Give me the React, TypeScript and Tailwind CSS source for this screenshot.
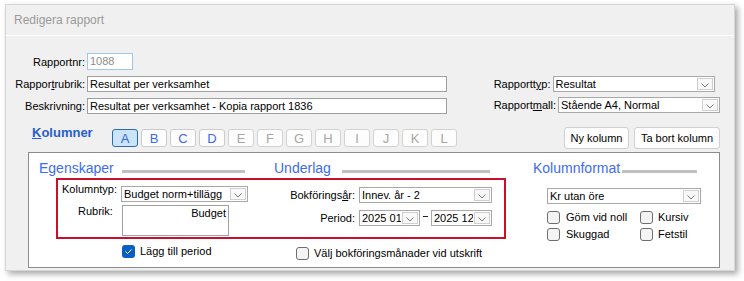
import clsx from 'clsx'

const tabs = ['A', 'B', 'C', 'D', 'E', 'F', 'G', 'H', 'I', 'J', 'K', 'L']

function Chevron() {
  return (
    <svg width="8" height="5" viewBox="0 0 8 5" className="mt-[4px]">
      <path d="M0.5 0.5 L4 4 L7.5 0.5" fill="none" stroke="#7a7a7a" strokeWidth="1" />
    </svg>
  )
}

function Combo({ value, className }: { value: string; className: string }) {
  return (
    <div className={clsx('flex h-[16px] shrink-0 border border-[#a8a8a8] bg-white', className)}>
      <span className="flex-1 overflow-hidden whitespace-nowrap pl-[2px] leading-[14px]">{value}</span>
      <span className="m-[1px] flex w-[16px] justify-center border border-[#cfcfcf] bg-[#f8f8f8]">
        <Chevron />
      </span>
    </div>
  )
}

function Check({ checked }: { checked?: boolean }) {
  if (checked) {
    return (
      <span className="flex h-[13px] w-[13px] shrink-0 items-center justify-center rounded-[3px] bg-[#0b5fc2]">
        <svg width="9" height="7" viewBox="0 0 9 7">
          <path d="M1.5 3.5 L3.5 5.5 L7.5 1.5" fill="none" stroke="white" strokeWidth="1" />
        </svg>
      </span>
    )
  }
  return <span className="h-[13px] w-[13px] shrink-0 rounded-[3px] border border-[#6e6e6e] bg-[#f4f4f4]" />
}

function Label({ children, className }: { children: React.ReactNode; className?: string }) {
  return <span className={clsx('shrink-0 whitespace-nowrap text-right leading-[16px]', className)}>{children}</span>
}

export default function App() {
  return (
    <div className="min-h-[281px] bg-white pl-[5px] pt-[4px] text-[11px] text-black [font-family:'Liberation_Sans',Arial,sans-serif]">
      <div className="flex h-[267px] w-[730px] flex-col border border-[#d6d6d6] bg-[#f0f0f0] shadow-[3px_3px_6px_rgba(0,0,0,0.35)]">
        <div className="h-[31px] shrink-0 border-b border-white pl-[8px] text-[12px] leading-[30px] text-[#9a9a9a]">
          Redigera rapport
        </div>

        {/* report fields */}
        <div className="flex pr-[14px] pt-[17px]">
          <div className="flex flex-col gap-[6px]">
            <div className="flex items-center">
              <Label className="w-[79px]">Rapportnr:</Label>
              <div className="ml-[2px] h-[17px] w-[46px] border border-[#9dc7ef] bg-white pl-[2px] leading-[15px] text-[#8c8c8c]">
                1088
              </div>
            </div>
            <div className="flex items-center">
              <Label className="w-[79px]">
                Rappor<u>t</u>rubrik:
              </Label>
              <div className="ml-[2px] h-[16px] w-[360px] border border-[#a0a0a0] bg-white pl-[2px] leading-[14px]">
                Resultat per verksamhet
              </div>
            </div>
            <div className="flex items-center">
              <Label className="w-[79px]">Beskrivning:</Label>
              <div className="ml-[2px] h-[16px] w-[360px] border border-[#a0a0a0] bg-white pl-[2px] leading-[14px]">
                Resultat per verksamhet - Kopia rapport 1836
              </div>
            </div>
          </div>
          <div className="ml-auto mt-[23px] flex flex-col gap-[5px]">
            <div className="flex items-center">
              <Label>
                Rapportt<u>y</u>p:
              </Label>
              <Combo value="Resultat" className="ml-[2px] w-[162px]" />
            </div>
            <div className="flex items-center">
              <Label>
                Rapport<u>m</u>all:
              </Label>
              <Combo value="Stående A4, Normal" className="ml-[2px] w-[162px]" />
            </div>
          </div>
        </div>

        {/* column tabs */}
        <div className="mt-[13px] flex h-[22px] items-center pr-[14px]">
          <div className="-mt-[2px] ml-[26px] w-[80px] self-start text-[13px] font-bold leading-[15px] text-[#2660cc]">
            <u>K</u>olumner
          </div>
          <div className="flex gap-[3px]">
            {tabs.map((t, i) => (
              <div
                key={t}
                className={clsx(
                  'flex h-[18px] w-[26px] items-center justify-center rounded-[3px] border text-[13px] leading-none',
                  i === 0
                    ? 'border-[#2f6bab] bg-[#cce4f7] text-[#3569e0]'
                    : i < 4
                      ? 'border-[#cbcbcb] bg-[#fdfdfd] text-[#3c68f0]'
                      : 'border-[#d2d2d2] bg-[#fdfdfd] text-[#a6a6a6]',
                )}
              >
                {t}
              </div>
            ))}
          </div>
          <div className="ml-auto flex gap-[5px]">
            <button className="h-[22px] w-[65px] rounded-[3px] border border-[#d0d0d0] bg-[#fdfdfd] text-[11px]">
              Ny kolumn
            </button>
            <button className="h-[22px] w-[86px] rounded-[3px] border border-[#d0d0d0] bg-[#fdfdfd] text-[11px]">
              Ta bort kolumn
            </button>
          </div>
        </div>

        {/* column panel */}
        <div className="ml-[22px] mr-[14px] mt-[3px] h-[116px] border border-[#8c8c8c] bg-white">
          <div className="flex items-start pl-[10px] pt-[7px] text-[14px] leading-[16px] text-[#3b6cf2]">
            <span className="w-[83px]">Egenskaper</span>
            <span className="mt-[10px] h-[3px] w-[123px] bg-[#c0c0c0]" />
            <span className="ml-[29px] w-[68px]">Underlag</span>
            <span className="mt-[10px] h-[3px] w-[148px] bg-[#c0c0c0]" />
            <span className="ml-[43px] w-[89px]">Kolumnformat</span>
            <span className="mt-[10px] h-[3px] w-[75px] bg-[#c0c0c0]" />
          </div>

          <div className="mt-[2px] flex">
            <div className="ml-[27px] flex h-[61px] w-[450px] border-2 border-[#c8102e]">
              <div className="flex flex-col">
                <div className="flex h-[22px] items-start">
                  <span className="w-[63px] pl-[4px] pt-[3px] leading-[13px]">Kolumntyp:</span>
                  <Combo value="Budget norm+tillägg" className="mt-[6px] w-[127px]" />
                </div>
                <div className="mt-[3px] flex items-start">
                  <span className="w-[64px] pl-[20px] leading-[13px]">Rubrik:</span>
                  <div className="h-[31px] w-[107px] border border-[#a0a0a0] bg-white pr-[2px] pt-[1px] text-right leading-[13px]">
                    Budget
                  </div>
                </div>
              </div>
              <div className="ml-auto flex flex-col gap-[7px] pr-[12px] pt-[7px]">
                <div className="flex items-center">
                  <Label className="w-[66px]">
                    Bokförings<u>å</u>r:
                  </Label>
                  <Combo value="Innev. år - 2" className="ml-[4px] w-[133px]" />
                </div>
                <div className="flex items-center">
                  <Label className="w-[66px]">Period:</Label>
                  <Combo value="2025 01" className="ml-[4px] w-[61px]" />
                  <span className="mx-[3px] h-[1px] w-[5px] -translate-y-[2px] bg-[#222]" />
                  <Combo value="2025 12" className="w-[61px]" />
                </div>
              </div>
            </div>

            <div className="ml-[41px] flex flex-col">
              <Combo value="Kr utan öre" className="mt-[10px] w-[154px]" />
              <div className="mt-[7px] flex flex-col gap-[4px] leading-[13px]">
                <div className="flex">
                  <div className="flex w-[93px] items-center gap-[6px]">
                    <Check />
                    <span>Göm vid noll</span>
                  </div>
                  <div className="flex items-center gap-[5px]">
                    <Check />
                    <span>Kursiv</span>
                  </div>
                </div>
                <div className="flex">
                  <div className="flex w-[93px] items-center gap-[6px]">
                    <Check />
                    <span>Skuggad</span>
                  </div>
                  <div className="flex items-center gap-[5px]">
                    <Check />
                    <span>Fetstil</span>
                  </div>
                </div>
              </div>
            </div>
          </div>

          <div className="ml-[93px] mt-[4px] flex items-start leading-[13px]">
            <div className="flex w-[174px] items-center gap-[5px]">
              <Check checked />
              <span>Lägg till period</span>
            </div>
            <div className="mt-[2px] flex items-center gap-[5px]">
              <Check />
              <span>Välj bokföringsmånader vid utskrift</span>
            </div>
          </div>
        </div>
      </div>
    </div>
  )
}
